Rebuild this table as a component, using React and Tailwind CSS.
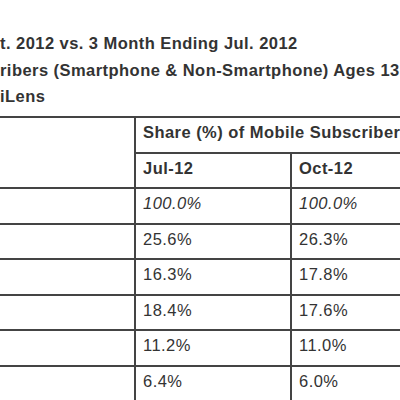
export default function App() {
  const rows = [
    { a: "100.0%", b: "100.0%", italic: true },
    { a: "25.6%", b: "26.3%" },
    { a: "16.3%", b: "17.8%" },
    { a: "18.4%", b: "17.6%" },
    { a: "11.2%", b: "11.0%" },
    { a: "6.4%", b: "6.0%" },
  ];
  const cell = "h-[35.57px] border-b-2 border-[#444] pl-[7px] pt-[6px] leading-[17px] whitespace-nowrap";
  return (
    <div className="w-[400px] h-[400px] overflow-hidden bg-white text-[#333] font-['Liberation_Sans',Arial,sans-serif] text-[16.5px] tracking-[0.45px]">
      <div className="pt-[30px] font-bold leading-[26.7px] whitespace-nowrap">
        <div>t. 2012 vs. 3 Month Ending Jul. 2012</div>
        <div>ribers (Smartphone &amp; Non-Smartphone) Ages 13+</div>
        <div>iLens</div>
      </div>
      <div className="mt-[5.9px] w-[470px] border-t-2 border-[#444] grid grid-cols-[136px_156px_178px]">
        <div className="row-span-2 border-b-2 border-r-2 border-[#444]"></div>
        <div className={`${cell} col-span-2 font-bold`}>Share (%) of Mobile Subscribers</div>
        <div className={`${cell} border-r-2 font-bold`}>Jul-12</div>
        <div className={`${cell} font-bold`}>Oct-12</div>
        {rows.map((r, i) => (
          <div key={i} className="contents">
            <div className="h-[35.57px] border-b-2 border-r-2 border-[#444]"></div>
            <div className={`${cell} border-r-2 ${r.italic ? "italic" : ""}`}>{r.a}</div>
            <div className={`${cell} ${r.italic ? "italic" : ""}`}>{r.b}</div>
          </div>
        ))}
      </div>
    </div>
  );
}
